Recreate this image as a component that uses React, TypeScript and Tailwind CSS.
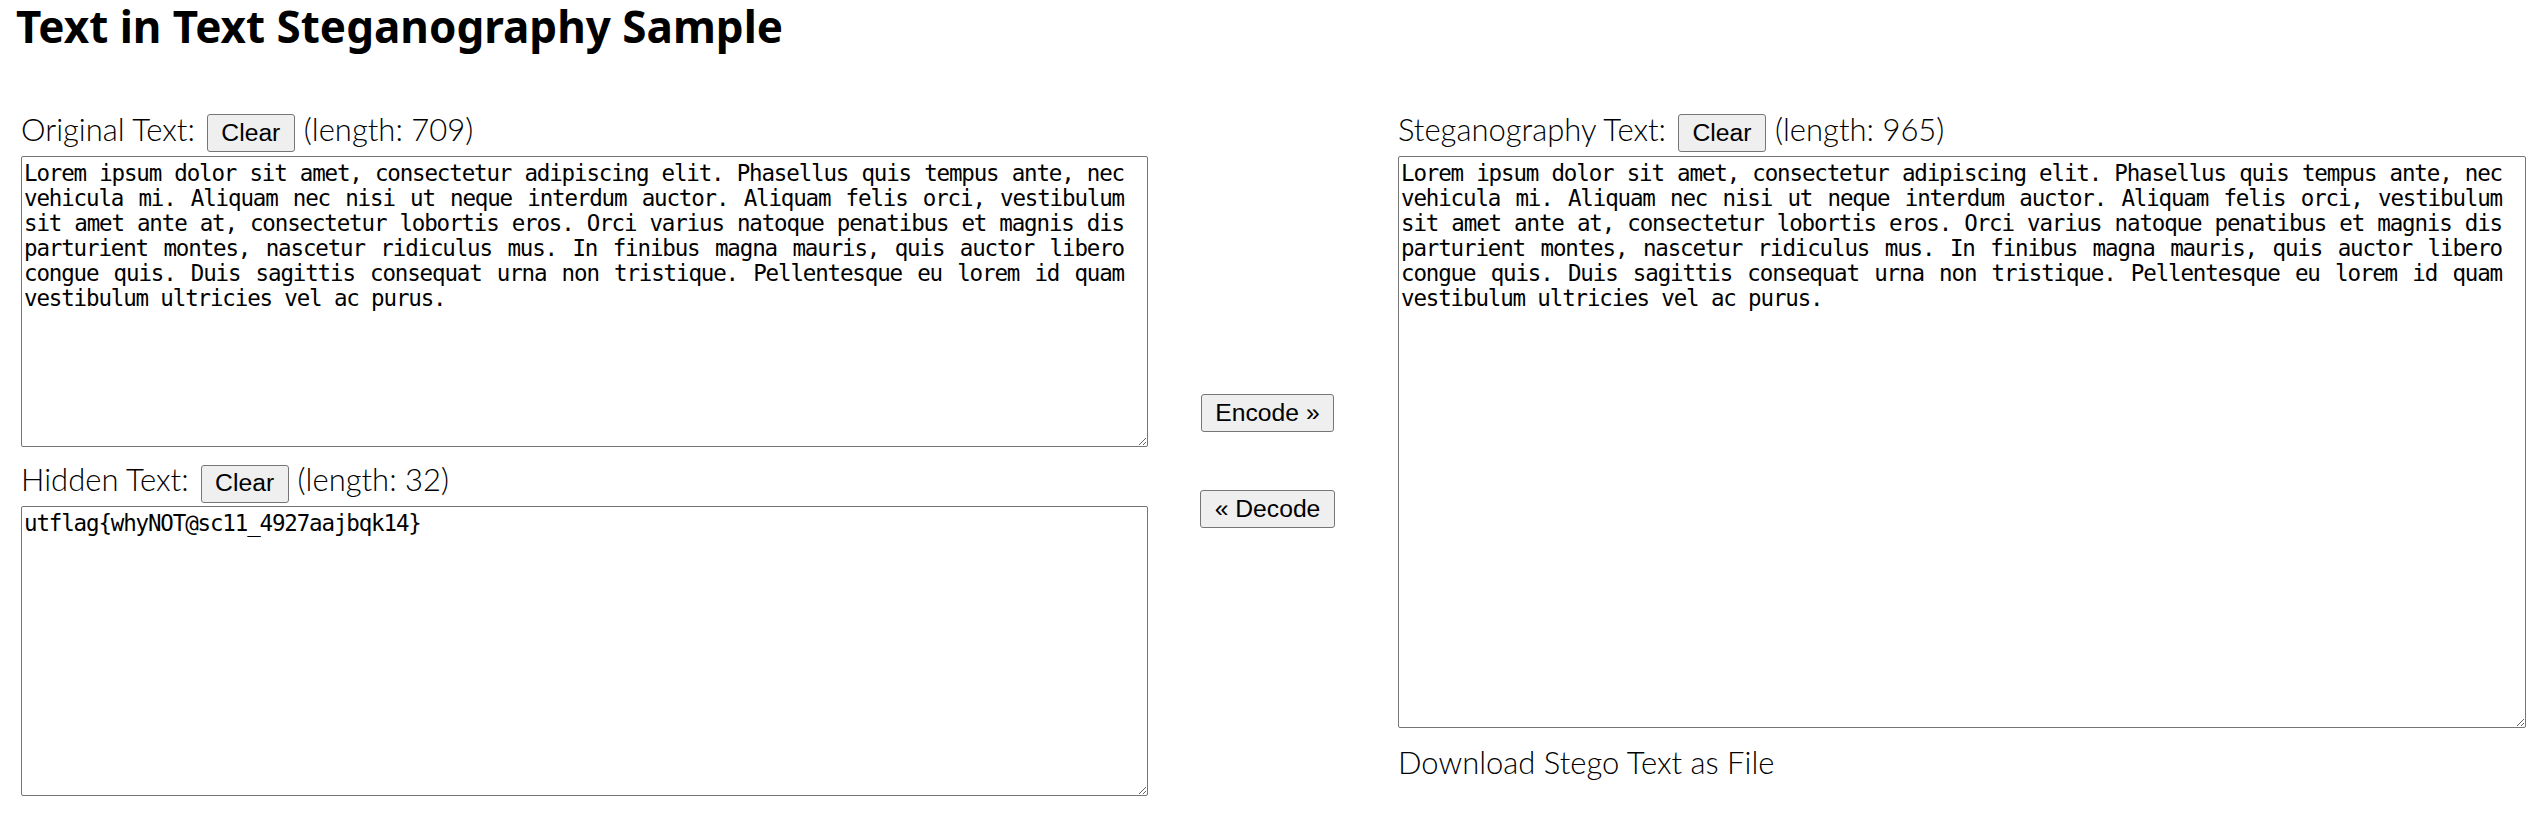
import React, { useState } from "react";

const LOREM =
  "Lorem ipsum dolor sit amet, consectetur adipiscing elit. Phasellus quis tempus ante, nec vehicula mi. Aliquam nec nisi ut neque interdum auctor. Aliquam felis orci, vestibulum sit amet ante at, consectetur lobortis eros. Orci varius natoque penatibus et magnis dis parturient montes, nascetur ridiculus mus. In finibus magna mauris, quis auctor libero congue quis. Duis sagittis consequat urna non tristique. Pellentesque eu lorem id quam vestibulum ultricies vel ac purus.";

const btn =
  "h-[38px] px-[13.5px] bg-[#efefef] border border-[#767676] rounded-[3px] text-[24.7px] font-normal text-black font-['Liberation_Sans',Arial,sans-serif] leading-none";

const area =
  "block w-full border border-[#767676] rounded-[2px] pl-[2px] pr-[23px] pt-[4px] text-[22.5px] font-normal leading-[25px] tracking-[-1.15px] text-justify text-black font-['DejaVu_Sans_Mono',monospace] outline-none";

type RowProps = {
  label: string;
  length: number;
  onClear: () => void;
};

const LabelRow = ({ label, length, onClear }: RowProps) => (
  <div className="flex items-baseline leading-[38px]">
    <span>{label}</span>
    <button type="button" className={`${btn} ml-[12px]`} onClick={onClear}>
      Clear
    </button>
    <span className="ml-[9px]">(length: {length})</span>
  </div>
);

export default function App() {
  const [original, setOriginal] = useState(LOREM);
  const [hidden, setHidden] = useState("utflag{whyNOT@sc11_4927aajbqk14}");
  const [stego, setStego] = useState(LOREM);

  return (
    <div className="min-h-screen bg-white text-black font-['Lato','Noto_Sans_CJK_JP',sans-serif]">
      <h1 className="pl-[16px] text-[44px] font-bold leading-[52px] font-['Noto_Sans',sans-serif]">
        Text in Text Steganography Sample
      </h1>

      <div className="flex pl-[21px] mt-[58px] text-[31px] font-light">
        {/* left: original + hidden */}
        <div className="w-[1127px] flex flex-col">
          <LabelRow label="Original Text:" length={709} onClear={() => setOriginal("")} />
          <textarea
            className={`${area} mt-[4px] h-[291px]`}
            value={original}
            onChange={(e) => setOriginal(e.target.value)}
          />
          <div className="mt-[13px]">
            <LabelRow label="Hidden Text:" length={32} onClear={() => setHidden("")} />
          </div>
          <textarea
            className={`${area} mt-[3px] h-[290px]`}
            value={hidden}
            onChange={(e) => setHidden(e.target.value)}
          />
        </div>

        {/* middle: actions */}
        <div className="w-[250px] pr-[11px] flex flex-col items-center">
          <button type="button" className={`${btn} mt-[284px]`}>
            Encode »
          </button>
          <button type="button" className={`${btn} mt-[58px]`}>
            « Decode
          </button>
        </div>

        {/* right: stego */}
        <div className="w-[1128px] flex flex-col">
          <LabelRow label="Steganography Text:" length={965} onClear={() => setStego("")} />
          <textarea
            className={`${area} mt-[4px] h-[572px]`}
            value={stego}
            onChange={(e) => setStego(e.target.value)}
          />
          <a className="mt-[15px] leading-[38px] text-black no-underline cursor-pointer">
            Download Stego Text as File
          </a>
        </div>
      </div>
    </div>
  );
}
